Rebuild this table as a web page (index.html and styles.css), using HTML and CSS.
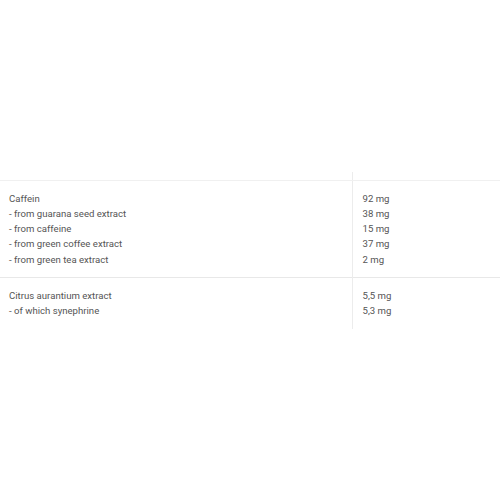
FILE: index.html
```html
<!DOCTYPE html>
<html lang="en">
<head>
    <meta charset="UTF-8">
    <meta name="viewport" content="width=device-width, initial-scale=1.0">
    <title>Nutrition facts</title>
    <link rel="stylesheet" href="styles.css">
</head>
<body>
    <!-- 成分表 -->
    <section class="facts">
        <table class="facts-table">
            <thead>
                <tr>
                    <th class="col-name"></th>
                    <th class="col-amount"></th>
                </tr>
            </thead>
            <tbody>
                <tr>
                    <td class="col-name">
                        Caffein<br>
                        - from guarana seed extract<br>
                        - from caffeine<br>
                        - from green coffee extract<br>
                        - from green tea extract
                    </td>
                    <td class="col-amount">
                        92 mg<br>
                        38 mg<br>
                        15 mg<br>
                        37 mg<br>
                        2 mg
                    </td>
                </tr>
                <tr>
                    <td class="col-name">
                        Citrus aurantium extract<br>
                        - of which synephrine
                    </td>
                    <td class="col-amount">
                        5,5 mg<br>
                        5,3 mg
                    </td>
                </tr>
            </tbody>
        </table>
    </section>
</body>
</html>
```

FILE: styles.css
```css
* {
    margin: 0;
    padding: 0;
    box-sizing: border-box;
}

body {
    font-family: Roboto, 'Liberation Sans', sans-serif;
    background: #fff;
    color: #555;
}

/* 成分表 */
.facts {
    padding-top: 172px;
}

.facts-table {
    width: 100%;
    border-collapse: collapse;
    font-size: 9.6px;
    line-height: 15.3px;
}

.facts-table th {
    height: 8px;
    border-bottom: 1px solid #f0f0f0;
}

.facts-table td {
    padding: 10px 9px 10px;
    vertical-align: top;
    text-align: left;
}

.facts-table tbody tr + tr td {
    border-top: 1px solid #e8e8e8;
}

.col-name {
    width: 352px;
}

.facts-table .col-amount {
    border-left: 1px solid #ececec;
    padding-left: 10px;
}
```
